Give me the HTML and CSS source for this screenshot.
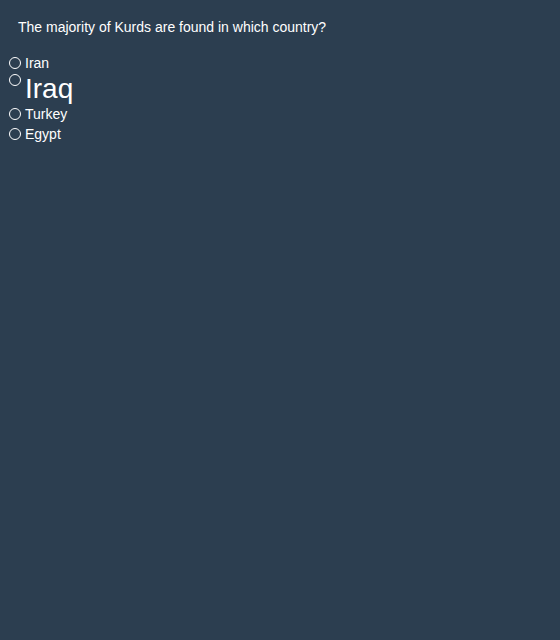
FILE: index.html
```html
<!DOCTYPE html>
<html lang="en">
<head>
<meta charset="utf-8">
<title>Quiz</title>
<link rel="stylesheet" href="styles.css">
</head>
<body>
<main class="quiz">
  <p class="question">The majority of Kurds are found in which country?</p>
  <ul class="options">
    <li class="option"><span class="radio"></span><span class="label">Iran</span></li>
    <li class="option option-big"><span class="radio"></span><span class="label">Iraq</span></li>
    <li class="option"><span class="radio"></span><span class="label">Turkey</span></li>
    <li class="option"><span class="radio"></span><span class="label">Egypt</span></li>
  </ul>
</main>
</body>
</html>
```

FILE: styles.css
```css
html, body {
  margin: 0;
  padding: 0;
  background: #2c3e50;
  height: 100%;
}

body {
  font-family: "Liberation Sans", Arial, sans-serif;
  color: #ffffff;
}

.quiz {
  padding: 19px 9px 0 9px;
}

.question {
  margin: 0 0 17.5px 0;
  padding-left: 9px;
  font-size: 14px;
  line-height: 16px;
}

.options {
  list-style: none;
  margin: 0;
  padding: 0;
}

.option {
  display: flex;
  align-items: flex-start;
  gap: 4px;
  font-size: 14px;
  line-height: 20px;
}

.radio {
  box-sizing: border-box;
  width: 12px;
  height: 12px;
  margin-top: 4px;
  border: 1px solid #ffffff;
  border-radius: 50%;
  flex: none;
}

.option-big .label {
  font-size: 28px;
  line-height: 31px;
}

.option-big .radio {
  margin-top: 1px;
}
```
